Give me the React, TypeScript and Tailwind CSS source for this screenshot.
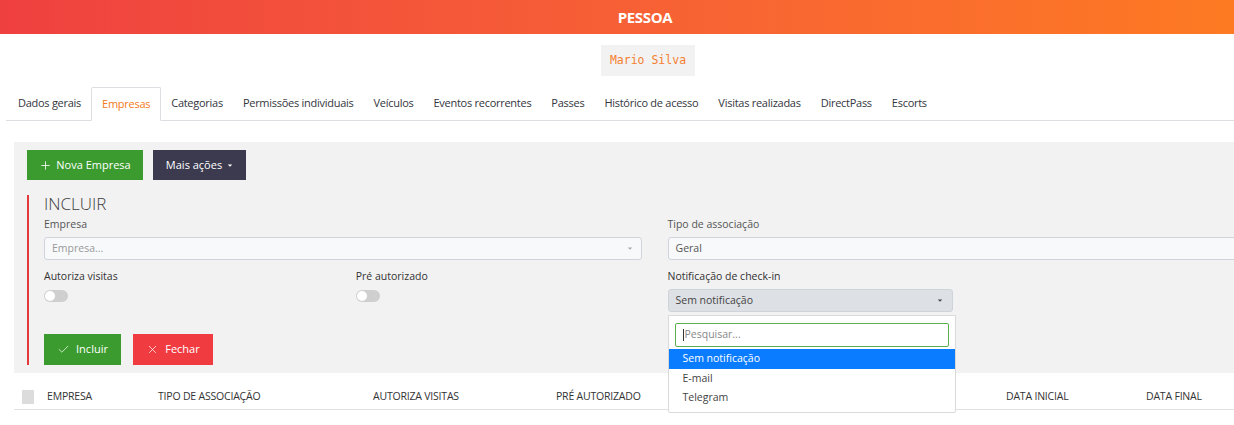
import React from 'react'
import { Plus, Check, X } from 'lucide-react'

const tabs = [
  'Dados gerais',
  'Empresas',
  'Categorias',
  'Permissões individuais',
  'Veículos',
  'Eventos recorrentes',
  'Passes',
  'Histórico de acesso',
  'Visitas realizadas',
  'DirectPass',
  'Escorts',
]

const Caret = ({ className = '' }: { className?: string }) => (
  <span
    className={`inline-block w-0 h-0 border-l-[3px] border-r-[3px] border-t-[3px] border-l-transparent border-r-transparent ${className}`}
  />
)

const Toggle = () => (
  <div className="w-[24px] h-[12px] rounded-full bg-[#cfcfcf] relative">
    <div className="absolute left-[1px] top-[1px] w-[10px] h-[10px] rounded-full bg-white" />
  </div>
)

export default function App() {
  return (
    <div className="w-[1234px] h-[425px] overflow-hidden bg-white">
      <div className="w-[1290px] font-['Open_Sans',sans-serif] text-[#333]">
        {/* Header */}
        <div className="h-[34px] bg-linear-to-r from-[#ef4040] to-[#fe7c1f] flex items-center justify-center">
          <span className="text-white font-bold text-[15px] tracking-tight">PESSOA</span>
        </div>

        {/* Name */}
        <div className="flex justify-center mt-[11px]">
          <div className="bg-[#f2f2f2] h-[31px] px-[9px] flex items-center ml-[6px]">
            <span className="font-['DejaVu_Sans_Mono',monospace] text-[11.5px] text-[#f57f30]">Mario Silva</span>
          </div>
        </div>

        {/* Tabs */}
        <div className="mt-[11px] mx-[6px] border-b border-[#dcdee2] flex pl-[2px] h-[34px]">
          {tabs.map((t) => (
            <div
              key={t}
              className={`px-[10px] flex items-center text-[11px] tracking-[-0.27px] ${
                t === 'Empresas'
                  ? 'border border-[#dcdee2] border-b-white -mb-px rounded-t-[2px] bg-white text-[#f47a20]'
                  : 'text-[#33363d]'
              }`}
            >
              {t}
            </div>
          ))}
        </div>

        {/* Panel */}
        <div className="mx-[14px] mt-[21px] bg-[#f2f2f2] pt-[8px] pb-[10px] pl-[13px] pr-[11px]">
          <div className="flex gap-[10px]">
            <button className="h-[30px] w-[116px] bg-[#3b9b2e] text-white text-[11px] flex items-center justify-center gap-[4px]">
              <Plus size={13} strokeWidth={1.5} />
              <span>Nova Empresa</span>
            </button>
            <button className="h-[30px] w-[93px] bg-[#3b3a4f] text-white text-[11px] flex items-center justify-center gap-[5px]">
              <span>Mais ações</span>
              <Caret className="border-t-white scale-75" />
            </button>
          </div>

          <div className="mt-[16px] border-l-[2px] border-[#e4393c] pl-[15px]">
            <div className="text-[17px] font-light leading-[18px] text-[#3d3d3d] -mt-[1px]">INCLUIR</div>

            <div className="grid grid-cols-4 gap-x-[26px] mt-[5px]">
              <div className="col-span-2">
                <div className="text-[10.5px] text-[#555] leading-[12px]">Empresa</div>
                <div className="mt-[7px] h-[23px] border border-[#cfd4da] rounded-[3px] bg-[#f8f9fa] flex items-center justify-between px-[7px]">
                  <span className="text-[10.5px] text-[#9a9a9a]">Empresa...</span>
                  <Caret className="border-t-[#aaa] mr-[1px] scale-75" />
                </div>
              </div>
              <div className="col-span-2">
                <div className="text-[10.5px] text-[#555] leading-[12px]">Tipo de associação</div>
                <div className="mt-[7px] h-[23px] border border-[#cfd4da] rounded-[3px] bg-[#f8f9fa] flex items-center px-[7px]">
                  <span className="text-[10.5px] text-[#555]">Geral</span>
                </div>
              </div>

              <div className="mt-[10px]">
                <div className="text-[10.5px] text-[#333] leading-[12px]">Autoriza visitas</div>
                <div className="mt-[8px]"><Toggle /></div>
              </div>
              <div className="mt-[10px]">
                <div className="text-[10.5px] text-[#333] leading-[12px]">Pré autorizado</div>
                <div className="mt-[8px]"><Toggle /></div>
              </div>
              <div className="mt-[10px] relative">
                <div className="text-[10.5px] text-[#333] leading-[12px]">Notificação de check-in</div>
                <div className="mt-[7px] h-[23px] border border-[#cfd4da] rounded-[3px] bg-[#dde0e5] flex items-center justify-between px-[7px]">
                  <span className="text-[10.5px] text-[#444]">Sem notificação</span>
                  <Caret className="border-t-[#444] mr-[2px] scale-75" />
                </div>

                {/* Dropdown */}
                <div className="absolute z-10 left-0 top-[45px] w-[288px] bg-white border border-[#dadada] rounded-b-[2px] pt-[7px] pb-[5px]">
                  <div className="mx-[6px] h-[24px] border border-[#5cae4e] rounded-[2px] flex items-center px-[7px]">
                    <span className="w-px h-[12px] bg-[#333] mr-[1px]" />
                    <span className="text-[10.5px] text-[#888]">Pesquisar...</span>
                  </div>
                  <div className="mt-[2px] h-[20px] bg-[#0a7cff] text-white text-[10.5px] flex items-center px-[14px]">
                    Sem notificação
                  </div>
                  <div className="h-[19px] text-[10.5px] text-[#444] flex items-center px-[14px]">E-mail</div>
                  <div className="h-[19px] text-[10.5px] text-[#444] flex items-center px-[14px]">Telegram</div>
                </div>
              </div>
              <div />
            </div>

            <div className="flex gap-[12px] mt-[22px] -mb-[2px]">
              <button className="h-[31px] w-[77px] bg-[#3b9b2e] text-white text-[11px] flex items-center justify-center gap-[6px]">
                <Check size={13} strokeWidth={1.3} />
                <span>Incluir</span>
              </button>
              <button className="h-[31px] w-[80px] bg-[#f03b40] text-white text-[11px] flex items-center justify-center gap-[6px]">
                <X size={13} strokeWidth={1.3} />
                <span>Fechar</span>
              </button>
            </div>
          </div>
        </div>

        {/* Table header */}
        <div className="mx-[14px] mt-[8px] h-[29px] pt-[4px] border-b border-[#e2e2e2] flex items-center pl-[8px] text-[10.5px] text-[#333] tracking-[-0.2px]">
          <div className="w-[12px] h-[14px] bg-[#dcdcdc] mr-[13px]" />
          <div className="w-[111px]">EMPRESA</div>
          <div className="w-[215px]">TIPO DE ASSOCIAÇÃO</div>
          <div className="w-[183px]">AUTORIZA VISITAS</div>
          <div className="w-[234px]">PRÉ AUTORIZADO</div>
          <div className="w-[216px]">NOTIFICAÇÃO</div>
          <div className="w-[140px]">DATA INICIAL</div>
          <div className="w-[120px]">DATA FINAL</div>
        </div>
      </div>
    </div>
  )
}
